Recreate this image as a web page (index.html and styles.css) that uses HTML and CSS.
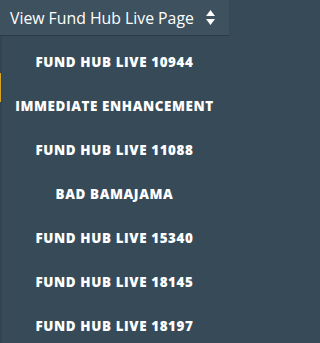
FILE: index.html
```html
<!DOCTYPE html>
<html>
<head>
<meta charset="utf-8">
<link rel="stylesheet" href="styles.css">
</head>
<body>
<div class="select">
  <div class="select-head">
    <span class="select-label">View Fund Hub Live Page</span>
    <svg class="caret" width="9" height="15" viewBox="0 0 9 15"><path d="M4.5 0 L9 6 H0 Z M4.5 15 L9 9 H0 Z" fill="#fff"/></svg>
  </div>
  <ul class="menu">
    <li>FUND HUB LIVE 10944</li>
    <li>IMMEDIATE ENHANCEMENT</li>
    <li>FUND HUB LIVE 11088</li>
    <li>BAD BAMAJAMA</li>
    <li>FUND HUB LIVE 15340</li>
    <li>FUND HUB LIVE 18145</li>
    <li>FUND HUB LIVE 18197</li>
  </ul>
  <span class="edge-mark"></span>
</div>
</body>
</html>
```
FILE: styles.css
```css
html, body {
  margin: 0;
  padding: 0;
  background: #374a58;
}
.select {
  position: relative;
  width: 229px;
  height: 343px;
  background: #374a58;
  color: #fff;
  font-family: "Open Sans", sans-serif;
  overflow: hidden;
}
.select-head {
  height: 35px;
  display: flex;
  align-items: center;
  justify-content: space-between;
  padding: 0 14px 0 10px;
  background: #3d515f;
  border-bottom: 1px solid #2b3b47;
}
.select-label {
  font-size: 15.8px;
}
.caret {
  display: block;
}
.menu {
  list-style: none;
  margin: 0;
  padding: 4px 0 0;
  box-shadow: inset 2px 0 0 #324451;
}
.menu li {
  height: 44px;
  display: flex;
  align-items: center;
  justify-content: center;
  font-family: "Open Sans", sans-serif;
  font-weight: 800;
  font-size: 13.4px;
  letter-spacing: 0.6px;
  white-space: nowrap;
}
.edge-mark {
  position: absolute;
  left: 0;
  top: 73px;
  width: 1px;
  height: 29px;
  background: #d9a521;
}
```
